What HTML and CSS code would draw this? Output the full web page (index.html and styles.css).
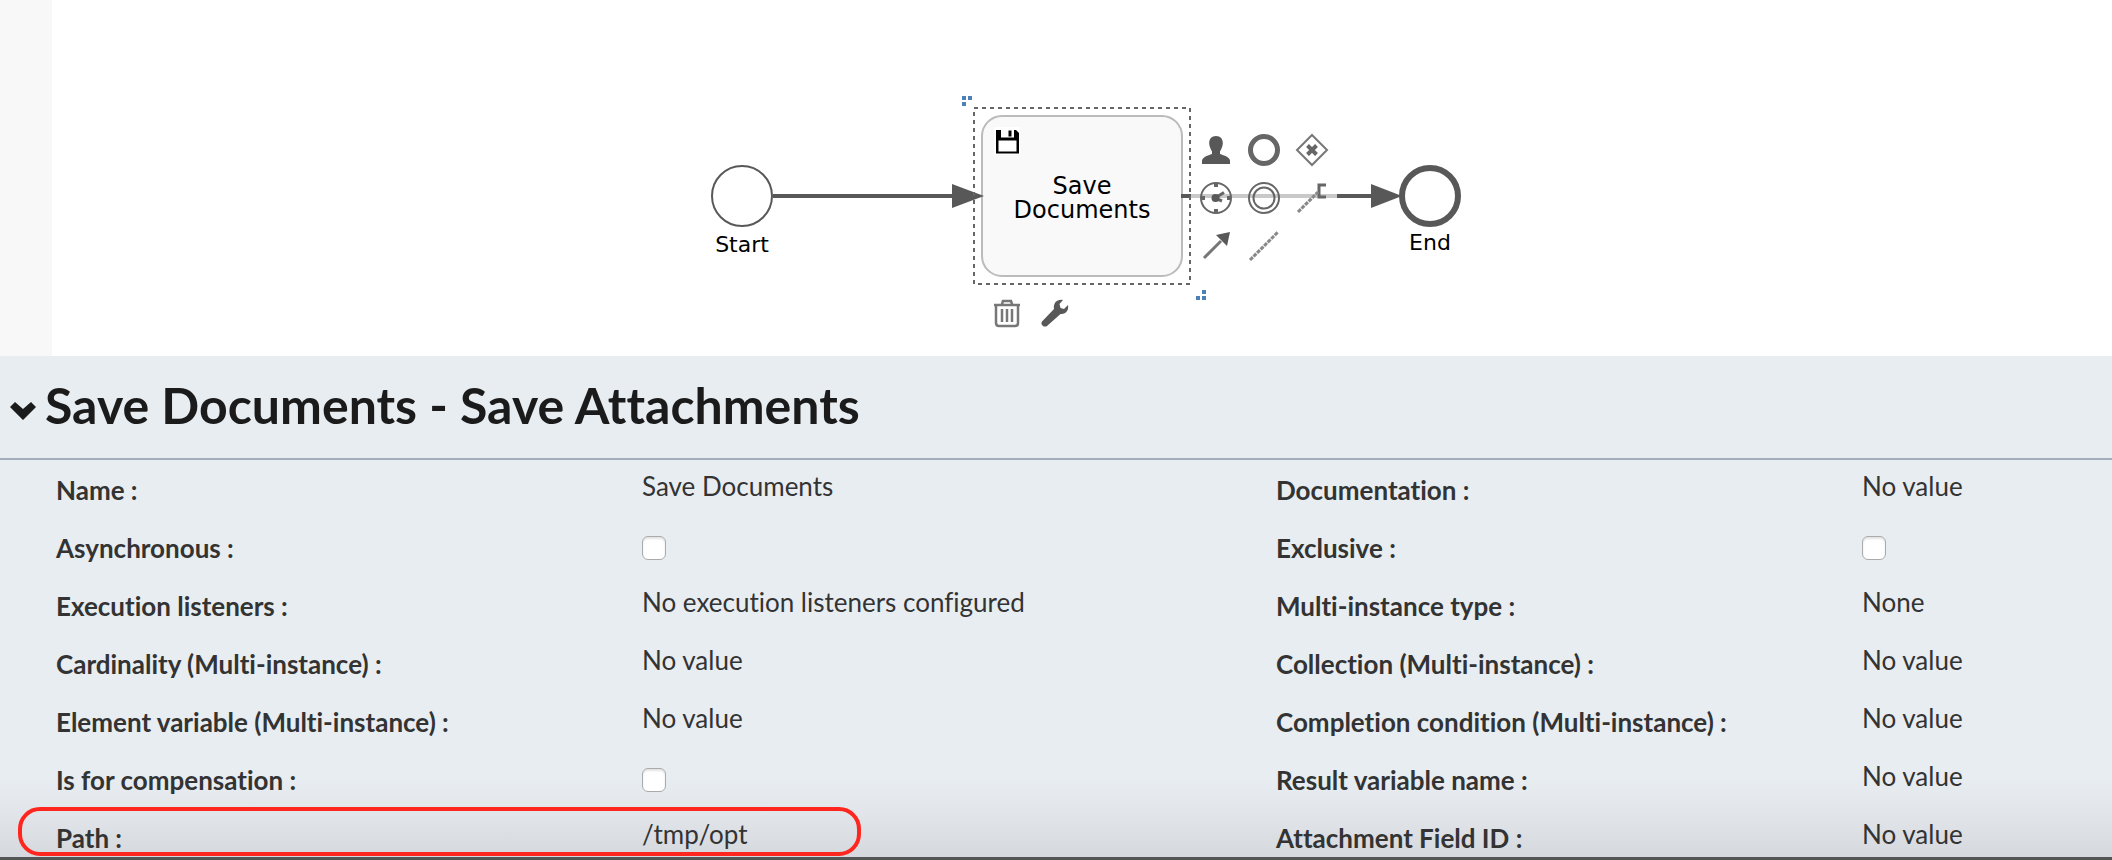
FILE: index.html
```html
<!DOCTYPE html>
<html lang="en">
<head>
<meta charset="utf-8">
<title>Save Documents - Save Attachments</title>
<link rel="stylesheet" href="styles.css">
</head>
<body>
<div class="editor">
  <section class="workspace">
    <div class="rail"></div>
    <div class="canvas">
      <svg class="flow" width="1500" height="356" viewBox="0 0 1500 356">
        <g class="edge">
          <path d="M773 196H954M1182 196H1373" stroke-width="4"/>
          <path class="solid" d="M1371 184L1402 196L1371 208Z"/>
        </g>
        <circle class="event" cx="742" cy="196" r="30" stroke-width="2"/>
        <circle class="event" cx="1430" cy="196" r="28" stroke-width="6"/>
        <rect class="task" x="982" y="116" width="200" height="160" rx="20"/>
        <path class="solid" d="M952 184L984 196L952 208Z"/>
        <path class="solid" d="M1181 194H1190V198H1181Z"/>
        <rect x="994" y="127" width="26" height="28" fill="#fff"/>
        <path d="M996 130H1016L1019 133V153.500H996Z" fill="#000"/>
        <path d="M1001 129.500H1014V137.500H1001ZM998.500 140.500H1016.500V151.500H998.500Z" fill="#fff"/>
        <rect x="1008.500" y="130.500" width="3" height="6" fill="#000"/>
        <rect class="selection" x="974" y="108" width="216" height="176"/>
        <path class="handle" d="M962 96h4v4h-4zM968 96h4v4h-4zM962 102h4v4h-4zM1202 290h4v4h-4zM1196 296h4v4h-4zM1202 296h4v4h-4z"/>
        <text class="event-label" x="742" y="252">Start</text>
        <text class="event-label" x="1430" y="250">End</text>
        <text class="task-label" x="1082" y="194">Save</text>
        <text class="task-label" x="1082" y="218">Documents</text>
      </svg>
      <div class="pad pad-side">
        <button class="tool" aria-label="User task"><svg viewBox="0 0 32 32"><path class="fill" d="M16 2C20.500 2 23 5 22.800 9.500C22.600 13 21 15.500 20 17.500V20C24 21.500 30 23 30 27V30H2V27C2 23 8 21.500 12 20V17.500C11 15.500 9.400 13 9.200 9.500C9 5 11.500 2 16 2Z"/></svg></button>
        <button class="tool" aria-label="End event"><svg viewBox="0 0 32 32"><circle cx="16" cy="16" r="13.500" stroke-width="5"/></svg></button>
        <button class="tool" aria-label="Exclusive gateway"><svg viewBox="0 0 32 32"><path d="M16 1L31 16L16 31L1 16Z" stroke="#777"/><path d="M11.500 11.500L20.500 20.500M20.500 11.500L11.500 20.500" stroke-width="4"/></svg></button>
        <button class="tool" aria-label="Timer event"><svg viewBox="0 0 32 32"><circle cx="16" cy="16" r="15"/><path d="M16 1V5M16 27V31M1 16H5M27 16H31" stroke-width="4"/><path d="M15 16L24 10.500M15 16L22 19" stroke-width="3"/><circle class="fill" cx="15.500" cy="16" r="4"/></svg></button>
        <button class="tool" aria-label="Intermediate event"><svg viewBox="0 0 32 32"><circle cx="16" cy="16" r="15"/><circle cx="16" cy="16" r="10.500"/></svg></button>
        <button class="tool" aria-label="Text annotation"><svg viewBox="0 0 32 32"><path d="M30 3H23V15H30" stroke-width="3"/><path d="M2 30L22 10" stroke="#888" stroke-width="3" stroke-dasharray="4 1"/></svg></button>
        <button class="tool" aria-label="Sequence flow"><svg viewBox="0 0 32 32"><path d="M4 28L21 11" stroke="#777" stroke-width="3"/><path class="fill" d="M30 2L27 16L16 5Z"/></svg></button>
        <button class="tool" aria-label="Association"><svg viewBox="0 0 32 32"><path d="M2 30L30 2" stroke="#888" stroke-width="3" stroke-dasharray="4 1"/></svg></button>
      </div>
      <div class="pad pad-below">
        <button class="tool" aria-label="Delete"><svg viewBox="0 0 32 32"><path d="M3 8H29M11 7L12 4H20L21 7M5 8V26Q5 29 8 29H24Q27 29 27 26V8M11 12V25M16 12V25M21 12V25" stroke="#777" stroke-width="2.500"/></svg></button>
        <button class="tool" aria-label="Change type"><svg viewBox="0 0 32 32"><path class="fill" d="M24 3L20.500 7L21.500 11L25 12L29 8C30 13 27 17.500 21.500 17L8 29C5 31 1 27.500 3 24.500L15 12C14 6 18 2 24 3Z"/></svg></button>
      </div>
    </div>
  </section>
  <section class="properties">
    <header class="heading">
      <svg class="chevron" viewBox="0 0 28 20"><path d="M6 1L14 8L22 1L27 6L14 19L1 6Z"/></svg>
      <h1 class="title">Save Documents - Save Attachments</h1>
    </header>
    <div class="fields">
      <span class="label">Name :</span><span class="value">Save Documents</span>
      <span class="label">Documentation :</span><span class="value">No value</span>
      <label class="label" for="async">Asynchronous :</label><span class="value"><input class="check" type="checkbox" id="async"></span>
      <label class="label" for="exclusive">Exclusive :</label><span class="value"><input class="check" type="checkbox" id="exclusive"></span>
      <span class="label">Execution listeners :</span><span class="value">No execution listeners configured</span>
      <span class="label">Multi-instance type :</span><span class="value">None</span>
      <span class="label">Cardinality (Multi-instance) :</span><span class="value">No value</span>
      <span class="label">Collection (Multi-instance) :</span><span class="value">No value</span>
      <span class="label">Element variable (Multi-instance) :</span><span class="value">No value</span>
      <span class="label">Completion condition (Multi-instance) :</span><span class="value">No value</span>
      <label class="label" for="compensation">Is for compensation :</label><span class="value"><input class="check" type="checkbox" id="compensation"></span>
      <span class="label">Result variable name :</span><span class="value">No value</span>
      <span class="label">Path :</span><span class="value">/tmp/opt</span>
      <span class="label">Attachment Field ID :</span><span class="value">No value</span>
    </div>
    <div class="highlight"></div>
  </section>
</div>
</body>
</html>
```
FILE: styles.css
```css
* { box-sizing: border-box; }
body { margin: 0; background: #fff; color: #333; font-family: Lato, sans-serif; font-variant-ligatures: none; }
.editor { display: flex; flex-direction: column; min-height: 100vh; overflow: hidden; }
.workspace { display: flex; height: 356px; }
.rail { width: 52px; background: #f8f8f8; }
.canvas { flex: 1; position: relative; }
.flow { position: absolute; left: -52px; top: 0; font-family: "DejaVu Sans", Verdana, sans-serif; }
.edge { stroke: #585858; }
.solid { fill: #585858; stroke: none; }
.event { fill: #fff; stroke: #585858; }
.task { fill: #f9f9f9; stroke: #bbb; stroke-width: 2; }
.selection { fill: none; stroke: #666; stroke-width: 2; stroke-dasharray: 4 4; }
.handle { fill: #4d7fb9; }
.event-label { font-size: 22px; text-anchor: middle; }
.task-label { font-size: 24px; text-anchor: middle; }
.pad { position: absolute; display: grid; gap: 16px; }
.pad-side { left: 1139px; top: 126px; padding: 8px 9px; grid-template-columns: repeat(3, 32px); background: rgba(255, 255, 255, .68); }
.pad-below { left: 939px; top: 297px; grid-template-columns: repeat(2, 32px); }
.tool { width: 32px; height: 32px; padding: 0; border: 0; background: none; }
.tool svg { display: block; width: 32px; height: 32px; overflow: visible; fill: none; stroke: #666; stroke-width: 2; }
.tool .fill { fill: #585858; stroke: none; }
.properties { position: relative; flex: 1; background: linear-gradient(to bottom, #e8edf1 84%, #e2e6ea 91%, #d5d8dc 100%); border-bottom: 3px solid #555; }
.heading { display: flex; align-items: center; gap: 8px; height: 104px; padding: 0 9px 4px; border-bottom: 2px solid #a3adbc; }
.chevron { width: 28px; height: 20px; margin-top: 12px; fill: #1b1b1b; }
.title { margin: 0; font-size: 50px; line-height: 64px; font-weight: 700; color: #1b1b1b; }
.fields { display: grid; grid-template-columns: 586fr 634fr 586fr 250fr; grid-auto-rows: 58px; padding-left: 56px; height: 396px; overflow: hidden; font-size: 26px; line-height: 32px; }
.label { padding-top: 14px; font-weight: 700; }
.value { padding-top: 10px; }
.check { appearance: none; display: block; width: 24px; height: 24px; margin: 8px 0 0; border: 1px solid #aaa; border-radius: 6px; background: #fff; box-shadow: inset 0 2px 2px #e4e4e4; }
.highlight { position: absolute; left: 18px; bottom: 1px; width: 843px; height: 49px; border: 4px solid #ff2620; border-radius: 22px; }
```
